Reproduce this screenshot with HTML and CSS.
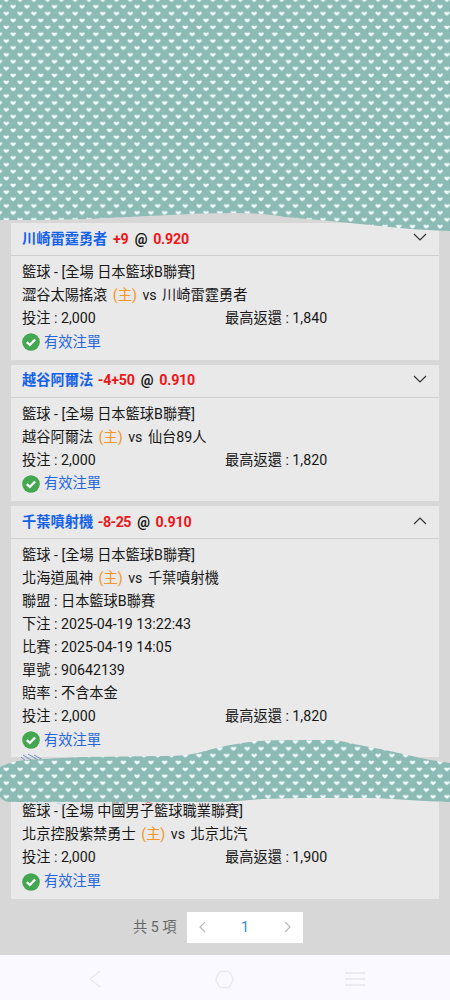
FILE: index.html
```html
<!DOCTYPE html>
<html lang="zh-Hant">
<head>
<meta charset="utf-8">
<meta name="viewport" content="width=device-width, initial-scale=1">
<title>注單</title>
<link rel="stylesheet" href="styles.css">
</head>
<body>
<svg class="defs" width="0" height="0" aria-hidden="true">
  <defs>
    <pattern id="hearts" width="13.77" height="13.74" patternUnits="userSpaceOnUse" patternTransform="translate(-.7 -3.4)">
      <rect width="14" height="14" fill="#8cbab5"/>
      <path id="heart" d="M7 5.5C5.6 4.6 4.2 3.6 4.2 2.5C4.2 1.3 6 1 7 2.1C8 1 9.8 1.3 9.8 2.5C9.8 3.6 8.4 4.6 7 5.5Z" fill="#f3ffff"/>
      <use href="#heart" x="-6.88" y="6.87"/>
      <use href="#heart" x="6.88" y="6.87"/>
    </pattern>
    <symbol id="valid" viewBox="0 0 18 18"><circle cx="9" cy="9" r="8.8" fill="#43a651"/><path d="M4.8 9.2L7.8 12L13.1 6.5" fill="none" stroke="#fff" stroke-width="2.3"/></symbol>
    <symbol id="down" viewBox="0 0 14 8"><path d="M1 1L7 7L13 1" fill="none" stroke="#333" stroke-width="1.2"/></symbol>
    <symbol id="up" viewBox="0 0 14 8"><path d="M1 7L7 1L13 7" fill="none" stroke="#333" stroke-width="1.2"/></symbol>
  </defs>
</svg>
<main class="screen">
  <section class="list">
    <article class="card">
      <header class="head"><b class="pick">川崎雷霆勇者</b><b class="odds">+9</b><b class="at">@</b><b class="odds">0.920</b><svg class="chevron high"><use href="#down"/></svg></header>
      <div class="body">
        <p>籃球 - [全場 日本籃球B聯賽]</p>
        <p class="match"><span>澀谷太陽搖滾</span><span class="home">(主)</span><span>vs</span><span>川崎雷霆勇者</span></p>
        <p class="stake"><span>投注 : 2,000</span><span>最高返還 : 1,840</span></p>
        <p class="status"><svg class="tick"><use href="#valid"/></svg>有效注單</p>
      </div>
    </article>
    <article class="card">
      <header class="head"><b class="pick">越谷阿爾法</b><b class="odds minus">-4+50</b><b class="at">@</b><b class="odds">0.910</b><svg class="chevron"><use href="#down"/></svg></header>
      <div class="body">
        <p>籃球 - [全場 日本籃球B聯賽]</p>
        <p class="match"><span>越谷阿爾法</span><span class="home">(主)</span><span>vs</span><span>仙台89人</span></p>
        <p class="stake"><span>投注 : 2,000</span><span>最高返還 : 1,820</span></p>
        <p class="status"><svg class="tick"><use href="#valid"/></svg>有效注單</p>
      </div>
    </article>
    <article class="card">
      <header class="head"><b class="pick">千葉噴射機</b><b class="odds minus tight">-8-25</b><b class="at">@</b><b class="odds">0.910</b><svg class="chevron"><use href="#up"/></svg></header>
      <div class="body">
        <p>籃球 - [全場 日本籃球B聯賽]</p>
        <p class="match"><span>北海道風神</span><span class="home">(主)</span><span>vs</span><span>千葉噴射機</span></p>
        <p>聯盟 : 日本籃球B聯賽</p>
        <p>下注 : 2025-04-19 13:22:43</p>
        <p>比賽 : 2025-04-19 14:05</p>
        <p>單號 : 90642139</p>
        <p>賠率 : 不含本金</p>
        <p class="stake"><span>投注 : 2,000</span><span>最高返還 : 1,820</span></p>
        <p class="status"><svg class="tick"><use href="#valid"/></svg>有效注單</p>
      </div>
    </article>
    <article class="card">
      <header class="head"></header>
      <div class="body">
        <p>籃球 - [全場 中國男子籃球職業聯賽]</p>
        <p class="match"><span>北京控股紫禁勇士</span><span class="home">(主)</span><span>vs</span><span>北京北汽</span></p>
        <p class="stake"><span>投注 : 2,000</span><span>最高返還 : 1,900</span></p>
        <p class="status"><svg class="tick"><use href="#valid"/></svg>有效注單</p>
      </div>
    </article>
  </section>
  <nav class="pager">
    <span class="total">共 5 項</span>
    <div class="pages">
      <svg width="7" height="12" viewBox="0 0 7 12"><path d="M6 1L1 6L6 11"/></svg>
      <span>1</span>
      <svg width="7" height="12" viewBox="0 0 7 12"><path d="M1 1L6 6L1 11"/></svg>
    </div>
  </nav>
  <footer class="system">
    <svg width="12" height="18" viewBox="0 0 12 18"><path d="M11 1L1 9L11 17"/></svg>
    <svg class="home-key" width="19" height="19" viewBox="0 0 19 19"><path d="M6.5 1.3H12.5Q14 1.3 15 3L17.5 7.5Q18.5 9.5 17.5 11.5L15 16Q14 17.7 12.5 17.7H6.5Q5 17.7 4 16L1.5 11.5Q.5 9.5 1.5 7.5L4 3Q5 1.3 6.5 1.3Z"/></svg>
    <svg width="20" height="16" viewBox="0 0 20 16"><path d="M0 2H20M0 8H20M0 14H20"/></svg>
  </footer>
  <svg class="tape" viewBox="0 0 450 1000" aria-hidden="true">
    <g fill="none" stroke="#7290c9" stroke-width="1"><path d="M21 757L27 762M23 755L36 763M28 754L43 763M34 755L43 760"/></g>
    <path d="M36 802q5 2 10 3M57 803l7 2" stroke="#b9d6ef" fill="none"/>
    <path d="M143 806l5-4 5 2" stroke="#db7678" fill="none"/>
    <path d="M112 803h7m3 0h6" stroke="#777" fill="none"/>
    <path d="M0 0H450V231Q413 230 380 226L330 221L285 217Q265 213 235 213Q200 213 170 215L105 218Q75 220 0 220Z" fill="url(#hearts)"/>
    <path d="M0 767Q13 761 25 760L62 758L84 757L165 756Q190 756 205 751Q235 743 260 741Q275 740 294 740L335 740Q346 742 354 744L385 750L430 760L450 763V802L425 801L375 798L300 798L262 799L225 802H10Q4 802 0 797Z" fill="url(#hearts)"/>
  </svg>
</main>
</body>
</html>
```
FILE: styles.css
```css
* { box-sizing: border-box; }
body { margin: 0; background: #d7d7d7; color: #171717; font: 14.22px/22.9px Roboto, "Noto Sans CJK TC", sans-serif; }
p { margin: 0; white-space: nowrap; }
.defs { display: block; }
.screen { position: relative; height: 1000px; overflow: hidden; }
.list { display: flex; flex-direction: column; gap: 5px; padding: 223px 11px 0; }
.card { background: #e9e9e9; height: 136.7px; }
.card:nth-child(3) { height: 251px; }
.card:nth-child(4) { height: 137px; }
.head { display: flex; align-items: center; gap: 5.7px; height: 33px; padding: 0 12px 0 11px; border-bottom: 1px solid #cfcfcf; color: #111; }
.pick { color: #1261e9; }
.odds { color: #ee1518; letter-spacing: -.2px; }
.minus { margin-left: -1px; }
.tight { letter-spacing: -.5px; }
.at { margin-left: .5px; }
.chevron { width: 14px; height: 8px; margin: 0 0 3px auto; }
.high { margin-bottom: 4px; }
.body { padding: 5px 11px 0; }
.match { display: flex; gap: 5.5px; }
.home { color: #f59524; }
.stake { display: grid; grid-template-columns: 203px 1fr; }
.status { display: flex; align-items: center; gap: 4px; height: 25px; color: #2466dc; }
.tick { width: 18px; height: 18px; }
.pager { display: flex; align-items: center; height: 56px; padding-left: 133px; gap: 11px; color: #686868; }
.total { width: 43px; white-space: nowrap; }
.pages { display: flex; align-items: center; justify-content: space-between; width: 116px; height: 31px; padding: 0 12px; background: #fff; color: #2590e0; }
.pages svg { fill: none; stroke: #b8b8b8; stroke-width: 1.2; }
.system { display: flex; align-items: center; justify-content: space-between; height: 46px; padding: 2px 85px 0 89px; background: #f9f9ff; }
.system svg { fill: none; stroke: #e8e8ec; stroke-width: 1.3; }
.home-key { margin-left: 3px; }
.tape { position: absolute; inset: 0; width: 450px; height: 1000px; pointer-events: none; }
```
